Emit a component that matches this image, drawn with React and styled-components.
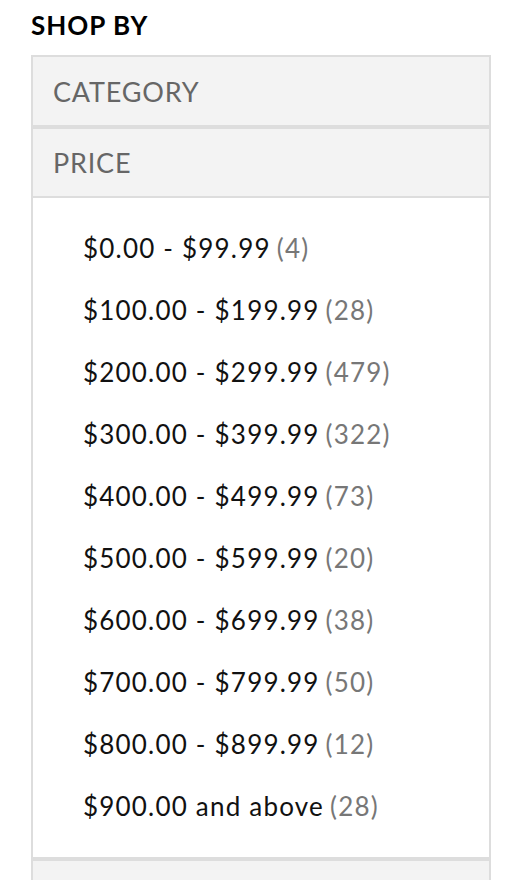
import React from 'react';
import styled, { createGlobalStyle } from 'styled-components';

const GlobalStyle = createGlobalStyle`
    html, body {
        margin: 0;
        padding: 0;
        background: #fff;
        font-family: 'Lato', 'Open Sans', sans-serif;
    }
`

const Sidebar = styled.div`
    width: 460px;
    padding: 8px 0 0 31px;
`

const Title = styled.h2`
    margin: 0 0 12px;
    font-size: 26px;
    line-height: 35px;
    font-weight: 700;
    color: #000;
    letter-spacing: 1px;
`

const Section = styled.div`
    border: 2px solid #ddd;
`

const SectionHeader = styled.div`
    height: ${props => props.h}px;
    display: flex;
    align-items: center;
    padding-left: 20px;
    background: #f3f3f3;
    color: #666;
    font-size: 27px;
    letter-spacing: 0.8px;
    border-bottom: ${props => (props.open ? "2px solid #ddd" : "none")};
`

const PriceList = styled.ul`
    list-style: none;
    margin: 0;
    padding: 19px 0 20px 50px;
    background: #fff;
`

const PriceItem = styled.li`
    height: 62px;
    display: flex;
    align-items: center;
    font-size: 26px;
    color: #111;
    letter-spacing: 1.2px;

    span {
        color: #777;
        margin-left: 6px;
    }
`

const prices = [
    ["$0.00 - $99.99", 4],
    ["$100.00 - $199.99", 28],
    ["$200.00 - $299.99", 479],
    ["$300.00 - $399.99", 322],
    ["$400.00 - $499.99", 73],
    ["$500.00 - $599.99", 20],
    ["$600.00 - $699.99", 38],
    ["$700.00 - $799.99", 50],
    ["$800.00 - $899.99", 12],
    ["$900.00 and above", 28],
]

export default function App() {
    return (
        <Sidebar>
            <GlobalStyle />
            <Title>SHOP BY</Title>
            <Section>
                <SectionHeader h={68}>CATEGORY</SectionHeader>
            </Section>
            <Section>
                <SectionHeader h={67} open>PRICE</SectionHeader>
                <PriceList>
                    {prices.map(([label, count]) => (
                        <PriceItem key={label}>
                            {label}<span>({count})</span>
                        </PriceItem>
                    ))}
                </PriceList>
            </Section>
            <Section>
                <SectionHeader h={68} />
            </Section>
        </Sidebar>
    );
}
